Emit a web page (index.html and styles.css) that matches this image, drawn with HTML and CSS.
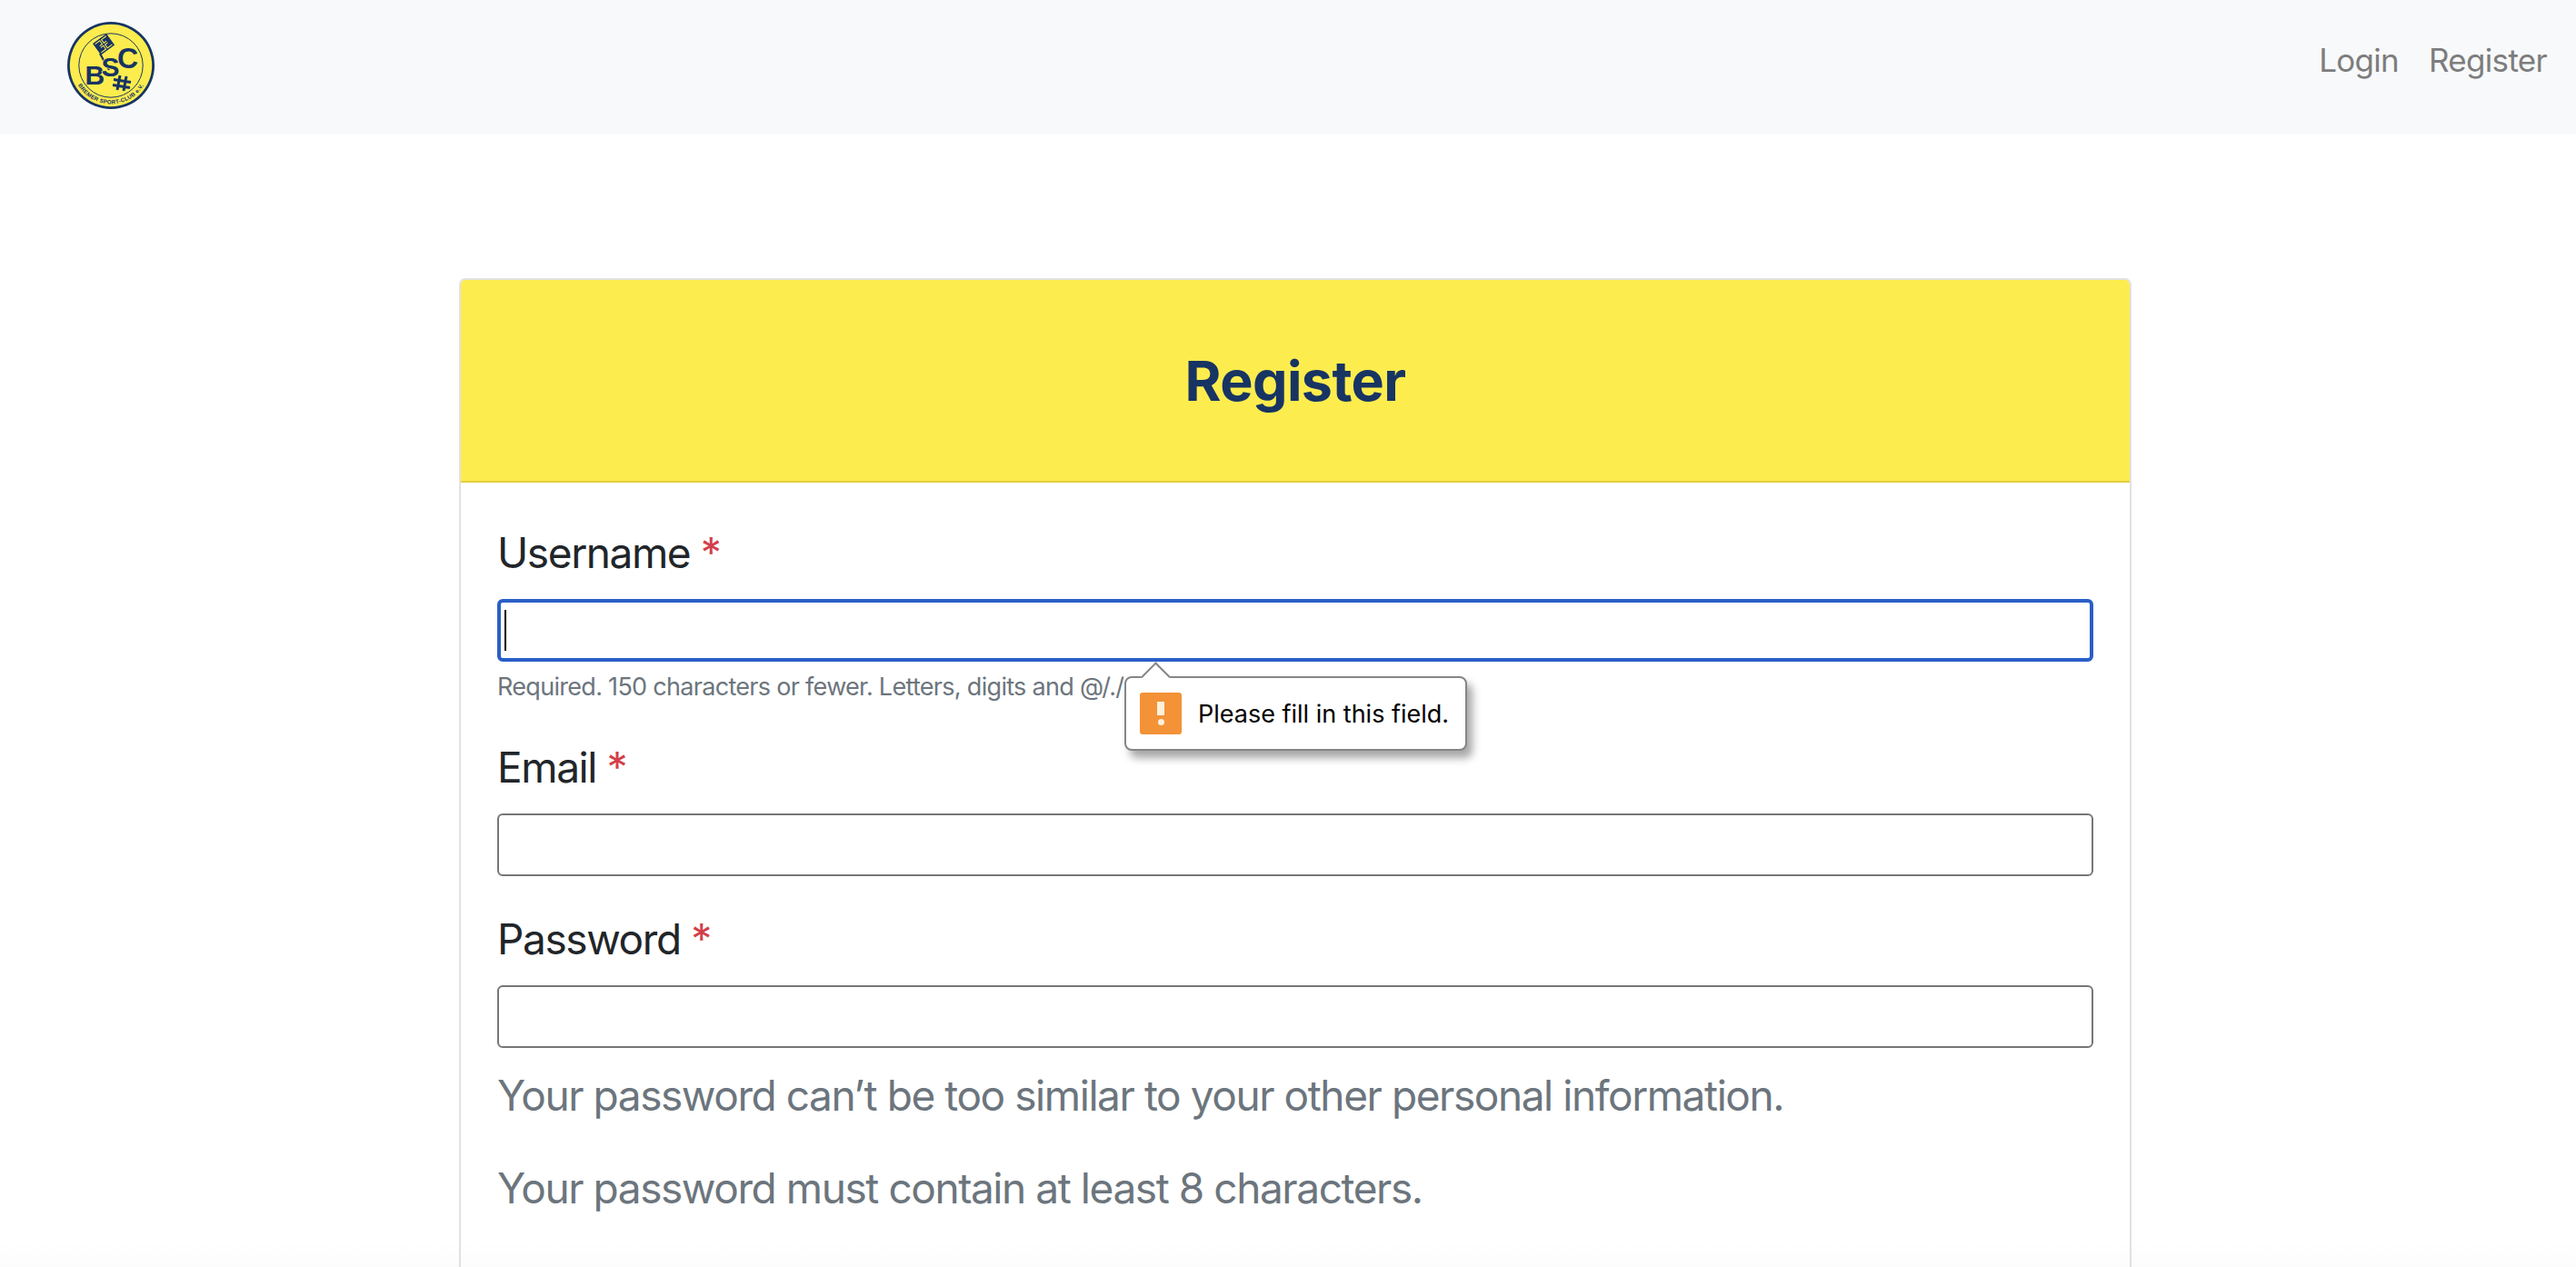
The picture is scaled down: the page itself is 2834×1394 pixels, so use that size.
FILE: index.html
```html
<!DOCTYPE html>
<html lang="en">
<head>
<meta charset="utf-8">
<title>Register</title>
<link rel="stylesheet" href="styles.css">
</head>
<body>
<nav class="navbar">
  <a class="brand" href="#">
    <svg class="logo" viewBox="0 0 96 96" width="96" height="96">
      <defs><path id="logoArc" d="M9.9 66 A42 42 0 0 0 86.1 66"/></defs>
      <circle cx="48" cy="48" r="48" fill="#173463"/>
      <circle cx="48" cy="48" r="45.2" fill="#fdec4e"/>
      <circle cx="48" cy="48" r="35.2" fill="none" stroke="#173463" stroke-width="1"/>
      <g transform="translate(28 24) rotate(-36)">
        <rect x="0" y="0" width="18.6" height="15.4" fill="#173463"/>
        <path d="M1.8 2h6.4v4.6h-3.6M16.8 2h-6.4v4.6h3.6M1.8 13.4h6.4v-4.6h-3.6M16.8 13.4h-6.4v-4.6h3.6" fill="none" stroke="#fdec4e" stroke-width="1"/>
      </g>
      <path d="M36 35 L46 53" stroke="#173463" stroke-width="2.2" fill="none"/>
      <text class="logo-b" x="19.5" y="68.5">B</text>
      <text class="logo-s" x="37.5" y="59.5">S</text>
      <text class="logo-c" x="55" y="51">C</text>
      <path d="M58 59 L55 75 M65 60 L62 76 M51 63.5 L70 66.5 M50 69.5 L69 72.5" stroke="#173463" stroke-width="3" fill="none"/>
      <text class="logo-ring"><textPath href="#logoArc" startOffset="50%" text-anchor="middle">BREMER SPORT-CLUB e.V.</textPath></text>
    </svg>
  </a>
  <div class="nav-links">
    <a href="#" class="nav-link">Login</a>
    <a href="#" class="nav-link">Register</a>
  </div>
</nav>
<main class="container">
  <section class="card">
    <header class="card-header"><h1>Register</h1></header>
    <form class="card-body">
      <div class="field">
        <label class="label">Username <span class="req">*</span></label>
        <div class="input input-focus"><span class="caret"></span></div>
        <small class="hint">Required. 150 characters or fewer. Letters, digits and @/./+/-/_ only.</small>
        <div class="bubble">
          <span class="arrow"></span>
          <span class="warn"><span class="warn-bar"></span><span class="warn-dot"></span></span>
          <span class="bubble-text">Please fill in this field.</span>
        </div>
      </div>
      <div class="field">
        <label class="label">Email <span class="req">*</span></label>
        <div class="input"></div>
      </div>
      <div class="field">
        <label class="label">Password <span class="req">*</span></label>
        <div class="input"></div>
        <div class="help">
          <p class="big">Your password can’t be too similar to your other personal information.</p>
          <p class="big">Your password must contain at least 8 characters.</p>
          <p class="big big-last">Your password can’t be entirely numeric.</p>
        </div>
      </div>
    </form>
  </section>
</main>
<div class="edge-fade"></div>
</body>
</html>
```

FILE: styles.css
```css
* { box-sizing: border-box; }
html, body { margin: 0; padding: 0; height: 1394px; overflow: hidden; }
body { background: #fff; color: #212529; font-family: Inter, "Liberation Sans", sans-serif; position: relative; }
a { text-decoration: none; }

.navbar {
  height: 147px;
  background: #f8f9fa;
  display: flex;
  align-items: flex-start;
  justify-content: space-between;
  padding: 0 32px 0 74px;
}
.brand { display: flex; margin-top: 24px; }
.logo { display: block; }
.logo-b { font: 700 30px "Liberation Sans", sans-serif; fill: #173463; }
.logo-s { font: 700 30px "Liberation Sans", sans-serif; fill: #173463; stroke: #fdec4e; stroke-width: 1.4px; paint-order: stroke; }
.logo-c { font: 700 32px "Liberation Sans", sans-serif; fill: #173463; }
.logo-ring { font: 700 6.2px "Liberation Sans", sans-serif; fill: #173463; letter-spacing: .25px; }
.nav-links { display: flex; gap: 33px; margin-top: 42px; }
.nav-link { color: #7d7d7d; font-size: 35px; line-height: 48px; letter-spacing: -.7px; }

.container { width: 1840px; margin: 159px 0 0 505px; }
.card { border: 2px solid #e2e2e2; border-radius: 7px; background: #fff; }
.card-header {
  height: 223px;
  padding-top: 2px;
  background: #fdec4e;
  border-bottom: 2px solid #e3cf3e;
  border-radius: 5px 5px 0 0;
  display: flex;
  align-items: center;
  justify-content: center;
}
.card-header h1 { margin: 0; color: #173463; font-size: 61px; font-weight: 700; line-height: 1.2; letter-spacing: -.6px; }
.card-body { padding: 49px 40px 0; display: flex; flex-direction: column; gap: 41px; }
.field { position: relative; display: flex; flex-direction: column; }
.label { font-size: 46px; line-height: 56px; font-weight: 400; letter-spacing: -1.4px; color: #212529; margin-bottom: 23px; }
.req { color: #d23f4b; }
.input { height: 69px; border: 2px solid #767676; border-radius: 6px; background: #fff; }
.input-focus { border: 4px solid #2a5fc7; display: flex; align-items: center; padding-left: 4px; }
.caret { width: 2px; height: 45px; background: #000; }
.hint { font-size: 27px; line-height: 36px; letter-spacing: -.7px; color: #6c757d; margin: 10px 0 1px; }
.help { margin-top: 19px; }
.big { margin: 0 0 36px; font-size: 46px; line-height: 66px; letter-spacing: -1.43px; color: #6c757d; }
.big-last { padding-top: 4px; }

.bubble {
  position: absolute;
  left: 690px;
  top: 164px;
  width: 377px;
  height: 82px;
  background: #fff;
  border: 2px solid #858585;
  border-radius: 8px;
  box-shadow: 6px 8px 10px rgba(0,0,0,.35);
  display: flex;
  align-items: center;
  padding-left: 15px;
  gap: 18px;
  z-index: 2;
}
.arrow {
  position: absolute;
  left: 21px;
  top: -13px;
  width: 23px;
  height: 23px;
  background: #fff;
  border-top: 2px solid #858585;
  border-left: 2px solid #858585;
  transform: rotate(45deg);
}
.warn {
  width: 46px; height: 46px; border-radius: 3px; background: #f39237;
  display: flex; flex-direction: column; align-items: center; justify-content: center; gap: 4px; flex: none;
}
.warn-bar { width: 8px; height: 15px; background: #fdf0dd; }
.warn-dot { width: 7px; height: 7px; border-radius: 50%; background: #fdf0dd; }
.bubble-text { font-size: 27px; color: #000; white-space: nowrap; }

.edge-fade {
  position: absolute;
  left: 0;
  right: 0;
  bottom: 0;
  height: 30px;
  background: linear-gradient(rgba(0,0,0,0), rgba(0,0,0,.012));
  pointer-events: none;
}
```
